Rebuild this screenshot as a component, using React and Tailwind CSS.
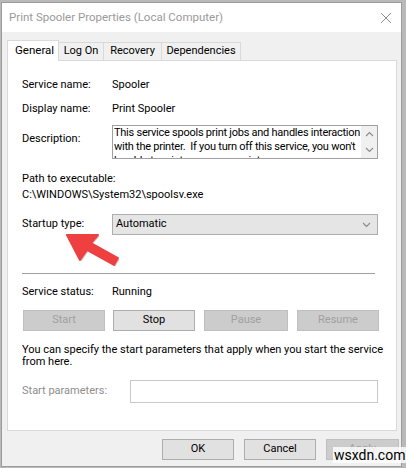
import React from "react";

const tabs = [
  { name: "General", w: "w-[52px]" },
  { name: "Log On", w: "w-[45px]" },
  { name: "Recovery", w: "w-[58px]" },
  { name: "Dependencies", w: "w-[79px]" },
];

function Row({ label, children, className = "" }) {
  return (
    <div className={`flex items-center ${className}`}>
      <div className="w-[90px] shrink-0">{label}</div>
      <div>{children}</div>
    </div>
  );
}

function Btn({ children, disabled, className = "" }) {
  return (
    <button
      className={`h-[21px] border text-center ${
        disabled
          ? "bg-[#cccccc] border-[#bfbfbf] text-[#a0a0a0]"
          : "bg-[#e1e1e1] border-[#adadad] text-black"
      } ${className}`}
    >
      {children}
    </button>
  );
}

function Chevron({ up }) {
  return (
    <svg width="9" height="6" viewBox="0 0 9 6" fill="none">
      <path
        d={up ? "M1 5 L4.5 1.5 L8 5" : "M1 1 L4.5 4.5 L8 1"}
        stroke="#8a8a8a"
        strokeWidth="1.1"
      />
    </svg>
  );
}

export default function App() {
  return (
    <div className="relative w-[406px] h-[468px] bg-[#b9b9b9] pt-[2px] pl-[1px] overflow-hidden [font-family:Roboto,'Liberation_Sans',sans-serif] text-[11px] text-black">
      <div className="w-[401px] h-[465px] border border-[#9c9c9c] bg-[#f0f0f0] flex flex-col">
        {/* title bar */}
        <div className="h-[29px] bg-white flex items-center justify-between pl-[7px] pr-[9px] shrink-0">
          <span className="text-[11.5px] text-[#9a9a9a]">
            Print Spooler Properties (Local Computer)
          </span>
          <svg width="12" height="12" viewBox="0 0 12 12">
            <path d="M1 1 L11 11 M11 1 L1 11" stroke="#8c8c8c" strokeWidth="1" />
          </svg>
        </div>

        {/* tab strip */}
        <div className="flex items-end pl-[5px] pt-[7px] h-[28px] shrink-0">
          {tabs.map((t, i) =>
            i === 0 ? (
              <div
                key={t.name}
                className={`relative z-10 h-[21px] -mb-px ${t.w} pl-[7px] bg-white border border-b-0 border-[#d9d9d9] flex items-center text-[11.5px]`}
              >
                {t.name}
              </div>
            ) : (
              <div
                key={t.name}
                className={`h-[18px] ${t.w} border border-l-0 border-b-0 border-[#d9d9d9] flex items-center justify-center`}
              >
                {t.name}
              </div>
            )
          )}
        </div>

        {/* General page */}
        <div className="ml-[5px] w-[390px] h-[371px] bg-white border border-[#d9d9d9] pl-[14px] pr-[17px] pt-[16px] shrink-0">
          <Row label="Service name:" className="h-[16px]">Spooler</Row>
          <Row label="Display name:" className="h-[16px] mt-[8px]">
            Print Spooler
          </Row>

          <div className="flex mt-[8px]">
            <div className="w-[90px] shrink-0 pt-[6px]">Description:</div>
            <div className="flex w-[266px] h-[34px] border border-[#a0a0a0] overflow-hidden">
              <div className="flex-1 pl-[1px] leading-[14px] tracking-[-0.25px] whitespace-nowrap overflow-hidden">
                This service spools print jobs and handles interaction
                <br />
                with the printer.&nbsp; If you turn off this service, you won't
                <br />
                be able to print or see your printers.
              </div>
              <div className="w-[16px] shrink-0 bg-[#f0f0f0] flex flex-col items-center justify-between py-[5px]">
                <Chevron up />
                <Chevron />
              </div>
            </div>
          </div>

          <div className="mt-[12px] leading-[16px]">Path to executable:</div>
          <div className="leading-[16px]">C:\WINDOWS\System32\spoolsv.exe</div>

          <div className="flex items-center mt-[11px]">
            <div className="w-[90px] shrink-0">Startup type:</div>
            <div className="w-[266px] h-[21px] bg-[#e5e5e5] border border-[#adadad] flex items-center justify-between pl-[3px] pr-[6px]">
              <span>Automatic</span>
              <Chevron />
            </div>
          </div>

          <div className="mt-[38px] w-[353px] h-px bg-[#a0a0a0]" />

          <Row label="Service status:" className="h-[16px] mt-[10px]">
            Running
          </Row>

          <div className="flex mt-[10px] gap-[8px] pl-px">
            <Btn disabled className="w-[82px]">Start</Btn>
            <Btn className="w-[82px]">Stop</Btn>
            <Btn disabled className="w-[84px] ml-px">Pause</Btn>
            <Btn disabled className="w-[82px] ml-px">Resume</Btn>
          </div>

          <p className="mt-[13px] leading-[12px] whitespace-nowrap">
            You can specify the start parameters that apply when you start the
            service
            <br />
            from here.
          </p>

          <div className="flex items-center mt-[12px]">
            <div className="w-[108px] shrink-0 text-[#8d8d8d]">Start parameters:</div>
            <div className="w-[248px] h-[23px] border border-[#c8c8c8] bg-white" />
          </div>
        </div>

        {/* dialog buttons */}
        <div className="flex justify-end gap-[10px] pr-[2px] pt-[8px]">
          <Btn className="w-[72px]">OK</Btn>
          <Btn className="w-[72px]">Cancel</Btn>
          <Btn disabled className="w-[73px]">Apply</Btn>
        </div>
      </div>

      {/* red pointer arrow */}
      <svg
        className="absolute left-[60px] top-[222px]"
        width="70"
        height="50"
        viewBox="0 0 70 50"
      >
        <g transform="translate(1.5 1.5)" fill="#7a7a7a" opacity="0.35">
          <path d="M7 13 L38 13 L31 21 L58 36 L54 43 L27 28 L20 38 Z" />
        </g>
        <path
          d="M7 13 L38 13 L31 21 L58 36 L54 43 L27 28 L20 38 Z"
          fill="#ee4040"
          stroke="#ee4040"
          strokeWidth="2"
          strokeLinejoin="round"
        />
      </svg>

      <div className="absolute left-[333px] top-[447px] bg-white/80 px-[1px] text-[14px] leading-[16px] text-black">
        wsxdn.com
      </div>
    </div>
  );
}
